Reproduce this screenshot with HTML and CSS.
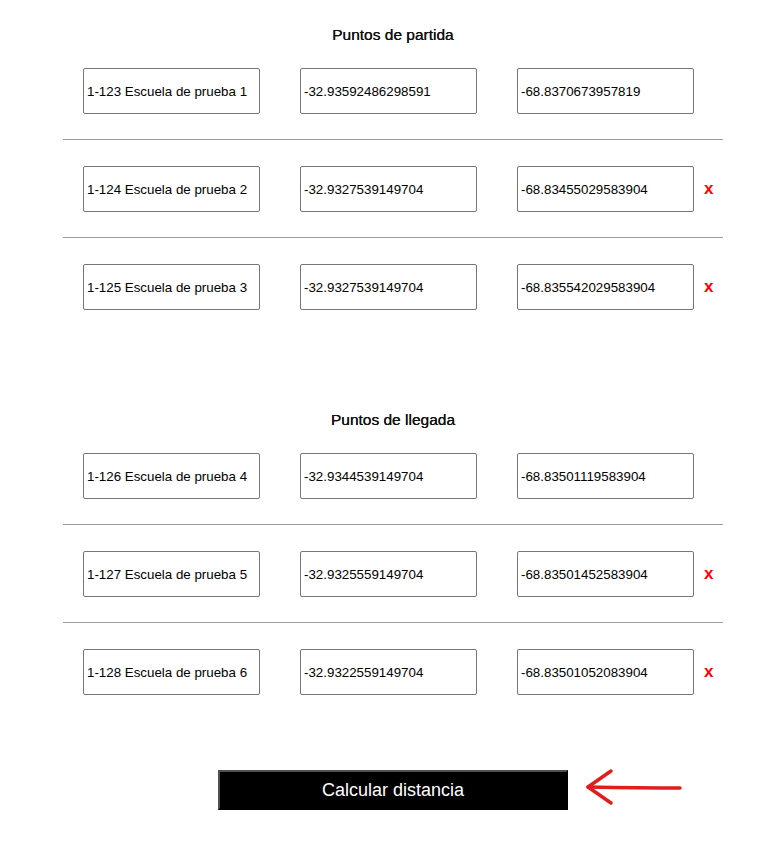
FILE: index.html
```html
<!DOCTYPE html>
<html lang="es">
<head>
<meta charset="utf-8">
<title>Calcular distancia</title>
<link rel="stylesheet" href="styles.css">
</head>
<body>
<main class="page">
  <section class="section">
    <h2 class="section-title">Puntos de partida</h2>
    <div class="row">
      <input class="field" type="text" value="1-123 Escuela de prueba 1">
      <input class="field" type="text" value="-32.93592486298591">
      <input class="field" type="text" value="-68.8370673957819">
    </div>
    <div class="row">
      <input class="field" type="text" value="1-124 Escuela de prueba 2">
      <input class="field" type="text" value="-32.9327539149704">
      <input class="field" type="text" value="-68.83455029583904">
      <span class="remove">x</span>
    </div>
    <div class="row">
      <input class="field" type="text" value="1-125 Escuela de prueba 3">
      <input class="field" type="text" value="-32.9327539149704">
      <input class="field" type="text" value="-68.835542029583904">
      <span class="remove">x</span>
    </div>
  </section>

  <section class="section section-second">
    <h2 class="section-title">Puntos de llegada</h2>
    <div class="row">
      <input class="field" type="text" value="1-126 Escuela de prueba 4">
      <input class="field" type="text" value="-32.9344539149704">
      <input class="field" type="text" value="-68.83501119583904">
    </div>
    <div class="row">
      <input class="field" type="text" value="1-127 Escuela de prueba 5">
      <input class="field" type="text" value="-32.9325559149704">
      <input class="field" type="text" value="-68.83501452583904">
      <span class="remove">x</span>
    </div>
    <div class="row">
      <input class="field" type="text" value="1-128 Escuela de prueba 6">
      <input class="field" type="text" value="-32.9322559149704">
      <input class="field" type="text" value="-68.83501052083904">
      <span class="remove">x</span>
    </div>
  </section>

  <div class="actions">
    <div class="button-wrap">
      <button class="calc-button" type="button">Calcular distancia</button>
      <svg class="arrow" width="100" height="42" viewBox="0 0 100 42" aria-hidden="true">
        <path d="M4 21 C30 21.5 60 22 96 22" fill="none" stroke="#e11d1d" stroke-width="3.5" stroke-linecap="round"/>
        <path d="M27 5 L4 21 L27 37" fill="none" stroke="#e11d1d" stroke-width="3.5" stroke-linecap="round" stroke-linejoin="round"/>
      </svg>
    </div>
  </div>
</main>
</body>
</html>
```

FILE: styles.css
```css
html, body {
  margin: 0;
  padding: 0;
  background: #ffffff;
}

body {
  font-family: "Liberation Sans", Arial, sans-serif;
  color: #000;
}

.page {
  width: 660px;
  margin-left: 63px;
  padding-top: 24px;
}

.section-title {
  margin: 0;
  padding-top: 3px;
  font-size: 15.5px;
  line-height: 15px;
  font-weight: 500;
  text-align: center;
  color: #111;
  text-shadow: 0 0 0.3px #000;
}

.section-second {
  margin-top: 74px;
}

.row {
  display: flex;
  align-items: center;
  gap: 40px;
  padding: 26px 0 25px 20px;
  border-bottom: 1px solid #9c9c9c;
}

.row:last-child {
  border-bottom: none;
}

.field {
  box-sizing: border-box;
  width: 177px;
  height: 46px;
  margin: 0;
  padding: 0 3px;
  border: 1px solid #767676;
  border-radius: 2px;
  font-family: "Liberation Sans", Arial, sans-serif;
  font-size: 13.333px;
  color: #000;
  background: #fff;
  outline: none;
}

.remove {
  margin-left: -30px;
  font-size: 17px;
  font-weight: bold;
  color: #ff0000;
  line-height: 1;
  padding-bottom: 2px;
}

.actions {
  display: flex;
  justify-content: center;
  margin-top: 50px;
}

.button-wrap {
  position: relative;
}

.calc-button {
  display: block;
  box-sizing: border-box;
  width: 350px;
  height: 40px;
  margin: 0;
  padding: 0;
  background: #000;
  color: #fff;
  border-style: solid;
  border-width: 2px;
  border-color: #505050 #000 #000 #505050;
  font-family: "Liberation Sans", Arial, sans-serif;
  font-size: 18px;
  cursor: pointer;
}

.arrow {
  position: absolute;
  left: calc(100% + 16px);
  top: -4px;
}
```
